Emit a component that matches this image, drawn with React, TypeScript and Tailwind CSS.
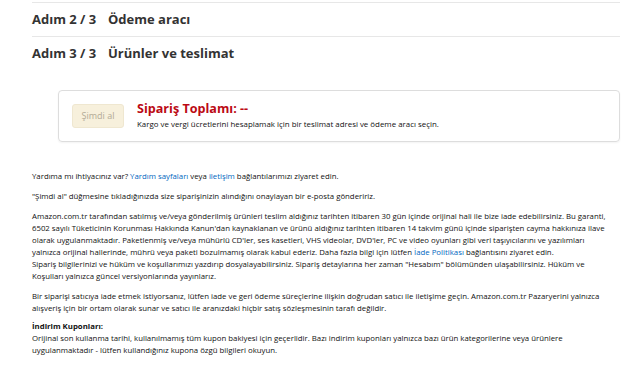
import React from 'react';

const font = { fontFamily: '"Open Sans", "Noto Sans", Arial, sans-serif' };

const Step: React.FC<{ n: string; title: string; border?: boolean }> = ({ n, title, border }) => (
  <div className={`flex items-center h-[34px] ${border ? 'border-b border-[#e7e7e7]' : ''}`}>
    <span className="w-[76px] text-[13px] font-bold text-[#333]">{n}</span>
    <span className="text-[13px] font-bold text-[#333]">{title}</span>
  </div>
);

const Link: React.FC<{ children: React.ReactNode }> = ({ children }) => (
  <span className="text-[#0066c0]">{children}</span>
);

export default function App() {
  return (
    <div className="w-[640px] h-[374px] bg-white overflow-hidden pt-[2px] pl-[32px] pr-[20px]" style={font}>
      <div className="border-t border-[#e7e7e7]">
        <Step n="Adım 2 / 3" title="Ödeme aracı" border />
        <Step n="Adım 3 / 3" title="Ürünler ve teslimat" />
      </div>

      <div className="ml-[26px] mt-[19px] h-[52px] border border-[#dddddd] rounded-[4px] shadow-[0_1px_2px_rgba(0,0,0,0.05)] flex items-center pl-[13px]">
        <div className="w-[52px] h-[24px] rounded-[3px] bg-[#f7f0dc] border border-[#efe7d0] flex items-center justify-center text-[9px] text-[#b3ab96]">
          Şimdi al
        </div>
        <div className="ml-[13px] flex flex-col">
          <div className="text-[12.6px] font-bold text-[#bb0a14] leading-[16px] -mt-[2px]">Sipariş Toplamı: --</div>
          <div className="text-[7.9px] text-[#111] leading-[12px] mt-[1px]">
            Kargo ve vergi ücretlerini hesaplamak için bir teslimat adresi ve ödeme aracı seçin.
          </div>
        </div>
      </div>

      <div className="mt-[28px] text-[7.8px] leading-[12px] text-[#111] whitespace-nowrap">
        <p>
          Yardıma mı ihtiyacınız var? <Link>Yardım sayfaları</Link> veya <Link>iletişim</Link> bağlantılarımızı ziyaret edin.
        </p>
        <p className="mt-[8px]">"Şimdi al" düğmesine tıkladığınızda size siparişinizin alındığını onaylayan bir e-posta göndeririz.</p>
        <p className="mt-[8px]">
          Amazon.com.tr tarafından satılmış ve/veya gönderilmiş ürünleri teslim aldığınız tarihten itibaren 30 gün içinde orijinal hali ile bize iade edebilirsiniz. Bu garanti,
          <br />
          6502 sayılı Tüketicinin Korunması Hakkında Kanun'dan kaynaklanan ve ürünü aldığınız tarihten itibaren 14 takvim günü içinde siparişten cayma hakkınıza ilave
          <br />
          olarak uygulanmaktadır. Paketlenmiş ve/veya mühürlü CD'ler, ses kasetleri, VHS videolar, DVD'ler, PC ve video oyunları gibi veri taşıyıcılarını ve yazılımları
          <br />
          yalnızca orijinal hallerinde, mührü veya paketi bozulmamış olarak kabul ederiz. Daha fazla bilgi için lütfen <Link>İade Politikası</Link> bağlantısını ziyaret edin.
          <br />
          Sipariş bilgilerinizi ve hüküm ve koşullarımızı yazdırıp dosyalayabilirsiniz. Sipariş detaylarına her zaman "Hesabım" bölümünden ulaşabilirsiniz. Hüküm ve
          <br />
          Koşulları yalnızca güncel versiyonlarında yayınlarız.
        </p>
        <p className="mt-[8px]">
          Bir siparişi satıcıya iade etmek istiyorsanız, lütfen iade ve geri ödeme süreçlerine ilişkin doğrudan satıcı ile iletişime geçin. Amazon.com.tr Pazaryerini yalnızca
          <br />
          alışveriş için bir ortam olarak sunar ve satıcı ile aranızdaki hiçbir satış sözleşmesinin tarafı değildir.
        </p>
        <p className="mt-[6px] font-bold">İndirim Kuponları:</p>
        <p>
          Orijinal son kullanma tarihi, kullanılmamış tüm kupon bakiyesi için geçerlidir. Bazı indirim kuponları yalnızca bazı ürün kategorilerine veya ürünlere
          <br />
          uygulanmaktadır - lütfen kullandığınız kupona özgü bilgileri okuyun.
        </p>
      </div>
    </div>
  );
}
